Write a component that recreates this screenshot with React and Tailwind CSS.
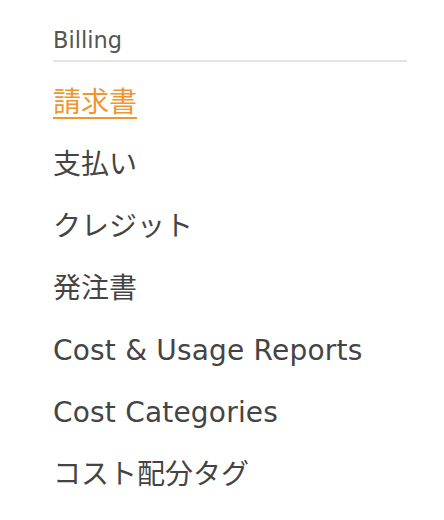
export default function App() {
  const items = [
    { t: "支払い", latin: false },
    { t: "クレジット", latin: false },
    { t: "発注書", latin: false },
    { t: "Cost & Usage Reports", latin: true },
    { t: "Cost Categories", latin: true },
    { t: "コスト配分タグ", latin: false },
  ];
  const font = { fontFamily: '"DejaVu Sans", "Noto Sans CJK JP", sans-serif' };
  return (
    <div className="w-[444px] h-[520px] bg-white pl-[53px] pr-[37px]" style={font}>
      <div className="pt-[27px] h-[60px] text-[22.5px] leading-[26px] text-[#555555]">Billing</div>
      <div className="h-[2px] bg-[#e3e3e3]"></div>
      <div className="pt-[10px] flex flex-col">
        <div className="h-[62px] flex items-center text-[28px] text-[#f0962e]">
          <a href="#" className="underline decoration-2 underline-offset-[5px]">請求書</a>
        </div>
        {items.map((it) => (
          <div
            key={it.t}
            className={it.latin
              ? "h-[62px] flex items-center text-[28px] tracking-[0.2px] text-[#444444]"
              : "h-[62px] flex items-center text-[28px] text-[#444444]"}
          >
            {it.t}
          </div>
        ))}
      </div>
    </div>
  );
}
